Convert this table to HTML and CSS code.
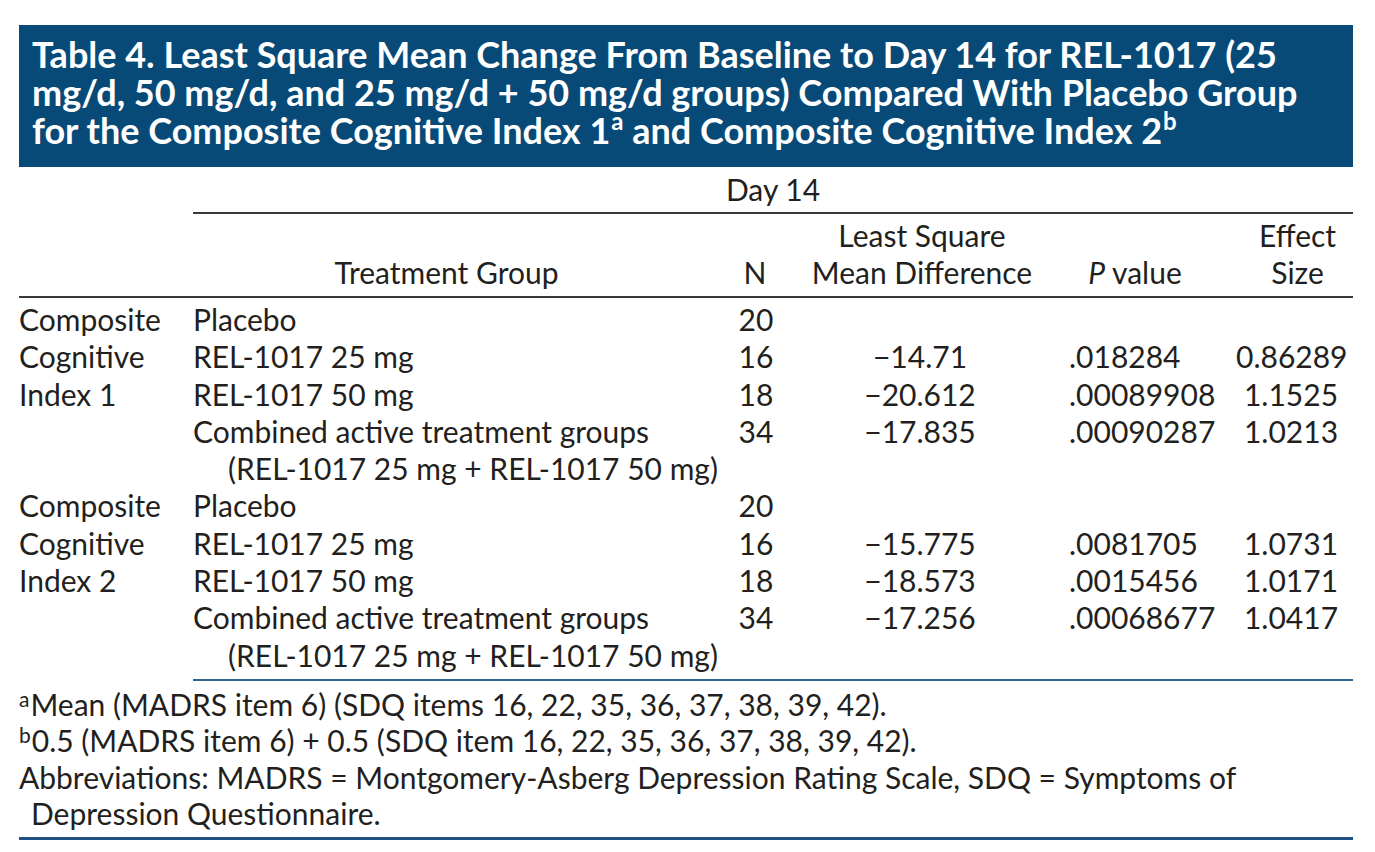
FILE: index.html
```html
<!DOCTYPE html>
<html lang="en">
<head>
<meta charset="utf-8">
<title>Table 4</title>
<link rel="stylesheet" href="styles.css">
</head>
<body>
<div class="page">
  <h1 class="title"><span class="tl">Table 4. Least Square Mean Change From Baseline to Day 14 for REL-1017 (25</span><span class="tl">mg/d, 50 mg/d, and 25 mg/d + 50 mg/d groups) Compared With Placebo Group</span><span class="tl">for the Composite Cognitive Index 1<sup>a</sup> and Composite Cognitive Index 2<sup>b</sup></span></h1>
  <table class="data">
    <colgroup>
      <col class="c1"><col class="c2"><col class="c3"><col class="c4"><col class="c5"><col class="c6">
    </colgroup>
    <thead>
      <tr class="span-row">
        <th class="blank"></th>
        <th colspan="5" class="day">Day 14</th>
      </tr>
      <tr class="head-row">
        <th></th>
        <th class="bottom">Treatment Group</th>
        <th class="bottom">N</th>
        <th>Least Square<br>Mean Difference</th>
        <th class="bottom"><i>P</i> value</th>
        <th class="es">Effect<br>Size</th>
      </tr>
    </thead>
    <tbody>
      <tr class="first">
        <td rowspan="4" class="measure">Composite<br>Cognitive<br>Index 1</td>
        <td>Placebo</td><td class="n">20</td><td></td><td></td><td></td>
      </tr>
      <tr>
        <td>REL-1017 25 mg</td><td class="n">16</td><td class="num">−14.71</td><td class="p">.018284</td><td class="es-v">0.86289</td>
      </tr>
      <tr>
        <td>REL-1017 50 mg</td><td class="n">18</td><td class="num">−20.612</td><td class="p">.00089908</td><td class="es-v">1.1525</td>
      </tr>
      <tr>
        <td>Combined active treatment groups<br><span class="sub">(REL-1017 25 mg + REL-1017 50 mg)</span></td><td class="n">34</td><td class="num">−17.835</td><td class="p">.00090287</td><td class="es-v">1.0213</td>
      </tr>
      <tr>
        <td rowspan="4" class="measure">Composite<br>Cognitive<br>Index 2</td>
        <td>Placebo</td><td class="n">20</td><td></td><td></td><td></td>
      </tr>
      <tr>
        <td>REL-1017 25 mg</td><td class="n">16</td><td class="num">−15.775</td><td class="p">.0081705</td><td class="es-v">1.0731</td>
      </tr>
      <tr>
        <td>REL-1017 50 mg</td><td class="n">18</td><td class="num">−18.573</td><td class="p">.0015456</td><td class="es-v">1.0171</td>
      </tr>
      <tr class="last">
        <td>Combined active treatment groups<br><span class="sub">(REL-1017 25 mg + REL-1017 50 mg)</span></td><td class="n">34</td><td class="num">−17.256</td><td class="p">.00068677</td><td class="es-v">1.0417</td>
      </tr>
    </tbody>
  </table>
  <div class="notes">
    <p><sup>a</sup>Mean (MADRS item 6) (SDQ items 16, 22, 35, 36, 37, 38, 39, 42).</p>
    <p><sup>b</sup>0.5 (MADRS item 6) + 0.5 (SDQ item 16, 22, 35, 36, 37, 38, 39, 42).</p>
    <p class="hang">Abbreviations: MADRS = Montgomery-Asberg Depression Rating Scale, SDQ = Symptoms of<br>Depression Questionnaire.</p>
  </div>
</div>
</body>
</html>
```
FILE: styles.css
```css
html, body {
  margin: 0;
  padding: 0;
  background: #ffffff;
}

body {
  font-family: Lato, "Open Sans", "Liberation Sans", sans-serif;
  color: #231f20;
}

.page {
  width: 1334px;
  margin-left: 19px;
  padding-top: 25px;
}

.title {
  margin: 0;
  background: #084a77;
  color: #ffffff;
  font-size: 36px;
  font-weight: 700;
  line-height: 38px;
  padding: 10px 10px 19px 13px;
  height: 113px;
  white-space: nowrap;
  display: flex;
  flex-direction: column;
}

.title .tl {
  display: block;
  height: 38px;
}

.title sup {
  font-size: 24px;
  line-height: 0;
  vertical-align: 14px;
  margin-left: 1px;
}

.data {
  border-collapse: separate;
  border-spacing: 0;
  width: 1334px;
  table-layout: fixed;
  margin-top: 3.6px;
  font-size: 30px;
}

.c1 { width: 174px; }
.c2 { width: 507px; }
.c3 { width: 110px; }
.c4 { width: 224px; }
.c5 { width: 202px; }
.c6 { width: 117px; }

.data th,
.data td {
  padding: 0;
  font-weight: 400;
  white-space: nowrap;
}

.span-row th {
  line-height: 37px;
  padding-bottom: 4px;
}

.span-row .day {
  border-bottom: 2px solid #3a3a3a;
  text-align: center;
}

.head-row th {
  line-height: 37px;
  padding-top: 3.4px;
  padding-bottom: 5px;
  border-bottom: 2px solid #3a3a3a;
  text-align: center;
  vertical-align: top;
}

.head-row th.bottom {
  vertical-align: bottom;
}

.head-row th.es {
  padding-left: 6px;
}

.data td {
  line-height: 37.3px;
  vertical-align: top;
  text-align: left;
}

.data tr.first td {
  padding-top: 3px;
}

.data td.n {
  text-align: center;
  padding-left: 2px;
}

.data td.num {
  text-align: center;
  padding-right: 4px;
}

.data td.p {
  padding-left: 35px;
}

.data td.es-v {
  text-align: center;
  padding-right: 7px;
}

.sub {
  padding-left: 35px;
}

.data tr.last td {
  padding-bottom: 5px;
  border-bottom: 2px solid #33638f;
}

.notes {
  font-size: 30px;
  line-height: 36.3px;
  padding: 5px 0 6px 0;
  border-bottom: 3px solid #1f5282;
}

.notes p {
  margin: 0;
}

.notes sup {
  font-size: 21px;
  line-height: 0;
  vertical-align: 9px;
  margin-right: 1px;
}

.notes .hang {
  padding-left: 12px;
  text-indent: -12px;
}
```
